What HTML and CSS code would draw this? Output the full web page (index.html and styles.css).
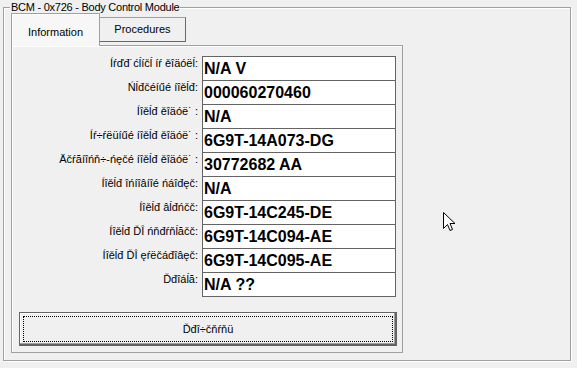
FILE: index.html
```html
<!DOCTYPE html>
<html>
<head>
<meta charset="utf-8">
<link rel="stylesheet" href="styles.css">
</head>
<body>
<fieldset class="group">
  <legend class="group-title">BCM - 0x726 - Body Control Module</legend>
  <div class="tabs">
    <div class="tab tab-active">Information</div>
    <div class="tab tab-inactive">Procedures</div>
  </div>
  <div class="page">
    <div class="grid">
      <div class="lbl">Íŕďđ˙ćĺíčĺ íŕ ěîäóëĺ:</div><div class="val">N/A V</div>
      <div class="lbl">Ńĺđčéíűé íîěĺđ:</div><div class="val">000060270460</div>
      <div class="lbl">Íîěĺđ ěîäóë˙ :</div><div class="val">N/A</div>
      <div class="lbl">Íŕ÷ŕëüíűé íîěĺđ ěîäóë˙ :</div><div class="val">6G9T-14A073-DG</div>
      <div class="lbl">Äčŕăíîńň÷-ńęčé íîěĺđ ěîäóë˙ :</div><div class="val">30772682 AA</div>
      <div class="lbl">Íîěĺđ îńíîâíîé ńáîđęč:</div><div class="val">N/A</div>
      <div class="lbl">Íîěĺđ âĺđńčč:</div><div class="val">6G9T-14C245-DE</div>
      <div class="lbl">Íîěĺđ ĎÎ ńňđŕňĺăčč:</div><div class="val">6G9T-14C094-AE</div>
      <div class="lbl">Íîěĺđ ĎÎ ęŕëčáđîâęč:</div><div class="val">6G9T-14C095-AE</div>
      <div class="lbl">Ďđîáĺă:</div><div class="val">N/A ??</div>
    </div>
    <button class="btn" type="button">Ďđî÷čňŕňü</button>
  </div>
</fieldset>
<svg class="cursor" width="13" height="20" viewBox="0 0 13 20">
  <path d="M0.5 0.5 L0.5 16.5 L4.5 12.5 L7 18.5 L9.5 17.5 L7 11.5 L12 11.5 Z" fill="#fff" stroke="#000" stroke-width="1" stroke-linejoin="miter"/>
</svg>
</body>
</html>
```

FILE: styles.css
```css
html, body {
  margin: 0;
  padding: 0;
  background: #f0f0f0;
}
body {
  width: 577px;
  height: 368px;
  overflow: hidden;
  font-family: "Liberation Sans", Arial, sans-serif;
  font-size: 11px;
  color: #000;
  position: relative;
}
.group {
  margin: 0 6px 0 3px;
  padding: 0 7px 7px 7px;
  border: 1px solid #a0a0a0;
  box-shadow: inset 1px 1px 0 #fff, 1px 1px 0 #fff;
  min-width: 0;
}
.group-title {
  margin-left: -1px;
  padding: 0 1px;
  line-height: 15px;
  letter-spacing: -0.25px;
  background: #f0f0f0;
}
.tabs {
  display: flex;
  align-items: flex-start;
  height: 32px;
  margin-top: -2px;
  position: relative;
  z-index: 1;
}
.tab {
  box-sizing: border-box;
  display: flex;
  align-items: center;
  justify-content: center;
  border: 1px solid #a0a0a0;
}
.tab-active {
  width: 89px;
  height: 33px;
  border-bottom: none;
  background: #f7f7f7;
  box-shadow: inset 1px 1px 0 #fff;
  padding-top: 4px;
}
.tab-inactive {
  width: 87px;
  height: 25px;
  margin-top: 4px;
  margin-left: -1px;
  border-color: #a0a0a0 #696969 #696969 #a0a0a0;
  background: #f0f0f0;
  padding-bottom: 1px;
}
.page {
  box-sizing: border-box;
  width: 392px;
  height: 308px;
  border: 1px solid #a0a0a0;
  box-shadow: inset 1px 1px 0 #fff;
  padding: 10px 6px 0 6px;
  display: flex;
  flex-direction: column;
}
.grid {
  display: grid;
  grid-template-columns: 1fr 194px;
  grid-auto-rows: 24px;
  column-gap: 4px;
}
.lbl {
  text-align: right;
  line-height: 13px;
  padding-top: 1px;
  white-space: nowrap;
}
.val {
  box-sizing: border-box;
  height: 25px;
  border: 1px solid #646464;
  background: #fff;
  font-weight: bold;
  font-size: 16px;
  line-height: 18px;
  padding: 3px 0 0 1px;
  white-space: nowrap;
}
.btn {
  box-sizing: border-box;
  margin-top: 16px;
  width: 378px;
  height: 34px;
  margin-left: 1px;
  border: 1px solid #646464;
  background: #f0f0f0;
  box-shadow: inset -1px -1px 0 #646464, inset -2px -2px 0 #a0a0a0, inset 1px 1px 0 #fff;
  font-family: "Liberation Sans", Arial, sans-serif;
  font-size: 11px;
  color: #000;
  outline: 1px dotted #000;
  outline-offset: -5px;
  padding: 0;
}
.cursor {
  position: absolute;
  left: 443px;
  top: 212px;
}
```
